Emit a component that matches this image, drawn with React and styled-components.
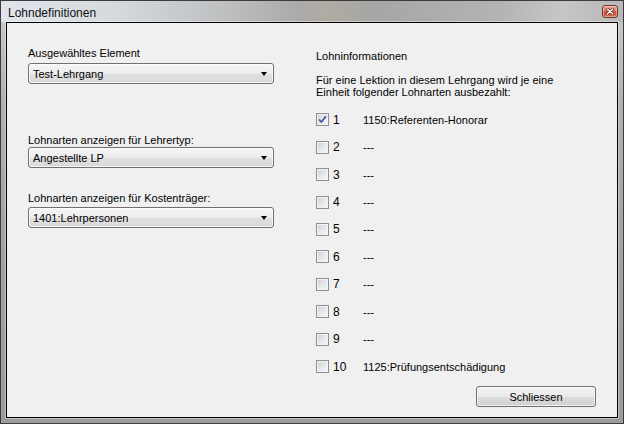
import React from "react";
import styled, { createGlobalStyle } from "styled-components";

const GlobalStyle = createGlobalStyle`
  html, body {
    margin: 0;
    padding: 0;
    background: #9a9a9a;
  }
  body {
    font-family: "Liberation Sans", Arial, sans-serif;
    font-size: 11px;
    color: #000;
  }
`;

const Window = styled.div`
  width: 624px;
  height: 424px;
  box-sizing: border-box;
  border: 1px solid #3c3c3c;
  background: linear-gradient(180deg, #c9cdd2 0%, #aeb0b2 25%, #a2a2a2 60%, #9c9c9c 100%);
  display: flex;
  flex-direction: column;
`;

const TitleBar = styled.div`
  height: 21px;
  display: flex;
  align-items: flex-start;
  padding: 0 5px 0 7px;
  background: linear-gradient(
    90deg,
    #dfe5eb 0%,
    #d6dadf 18%,
    #bfc1c3 35%,
    #aaaaaa 48%,
    #b1aca2 52%,
    #a6a6a6 60%,
    #b3b3b3 80%,
    #c6c6c6 90%,
    #b7b7b7 100%
  );
`;

const Title = styled.div`
  flex: 1;
  padding-top: 5px;
  line-height: 14px;
  font-size: 12px;
  color: #111;
`;

const CloseButton = styled.div`
  width: 16px;
  height: 13px;
  margin-top: 4px;
  box-sizing: border-box;
  border: 1px solid #6e3a32;
  border-radius: 3px;
  background: linear-gradient(180deg, #eba898 0%, #dc7763 45%, #c9472f 55%, #d8715a 100%);
  box-shadow: inset 0 0 0 1px rgba(255, 255, 255, 0.35);
  display: flex;
  align-items: center;
  justify-content: center;
`;

const Frame = styled.div`
  flex: 1;
  display: flex;
  padding: 0 5px 5px;
`;

const Client = styled.div`
  flex: 1;
  display: flex;
  background: #f0f0f0;
  border: 1px solid #000;
  box-shadow: 0 0 0 1px rgba(255, 255, 255, 0.4);
  padding: 24px 21px 9px;
`;

const LeftColumn = styled.div`
  width: 246px;
  display: flex;
  flex-direction: column;
`;

const RightColumn = styled.div`
  flex: 1;
  margin-left: 42px;
  display: flex;
  flex-direction: column;
`;

const Field = styled.div`
  display: flex;
  flex-direction: column;
  margin-top: ${(p) => p.$top || 0}px;
`;

const Label = styled.div`
  line-height: 13px;
  margin-bottom: ${(p) => p.$gap || 0}px;
`;

const Combo = styled.div`
  height: 21px;
  box-sizing: border-box;
  border: 1px solid #707070;
  border-radius: 3px;
  background: linear-gradient(180deg, #f6f6f6 0%, #ececec 50%, #e0e0e0 51%, #d9d9d9 100%);
  box-shadow: inset 0 0 0 1px rgba(255, 255, 255, 0.7);
  display: flex;
  align-items: center;
  padding: 0 6px 0 4px;
`;

const ComboText = styled.span`
  flex: 1;
`;

const Arrow = styled.span`
  width: 0;
  height: 0;
  border-left: 3.5px solid transparent;
  border-right: 3.5px solid transparent;
  border-top: 4px solid #000;
`;

const Heading = styled.div`
  line-height: 13px;
  margin-top: 3px;
`;

const Paragraph = styled.div`
  line-height: 12px;
  margin-top: 11px;
`;

const Rows = styled.div`
  margin-top: 8px;
  display: flex;
  flex-direction: column;
`;

const Row = styled.div`
  height: 27.44px;
  display: flex;
  align-items: center;
`;

const Box = styled.span`
  width: 13px;
  height: 13px;
  box-sizing: border-box;
  border: 1px solid #8e8f8f;
  background: linear-gradient(135deg, #cdd0d5 0%, #e6e7e9 50%, #f8f8f8 100%);
  box-shadow: inset 0 0 0 1px #f4f4f4;
  display: flex;
  align-items: center;
  justify-content: center;
`;

const Number = styled.span`
  width: 30px;
  margin-left: 4px;
  font-size: 12px;
`;

const Value = styled.span`
  font-size: 11px;
`;

const Footer = styled.div`
  margin-top: 6px;
  display: flex;
  justify-content: flex-end;
`;

const Button = styled.button`
  width: 120px;
  height: 21px;
  box-sizing: border-box;
  border: 1px solid #707070;
  border-radius: 3px;
  background: linear-gradient(180deg, #f3f3f3 0%, #ebebeb 50%, #dddddd 51%, #cfcfcf 100%);
  box-shadow: inset 0 0 0 1px rgba(255, 255, 255, 0.7);
  font-family: "Liberation Sans", Arial, sans-serif;
  font-size: 11px;
  color: #000;
  padding: 0;
`;

const CheckMark = () => (
  <svg width="9" height="9" viewBox="0 0 9 9">
    <path d="M1 4.5 L3.4 7 L8 1.2" fill="none" stroke="#3b58a8" strokeWidth="1.8" />
  </svg>
);

const CloseGlyph = () => (
  <svg width="8" height="7" viewBox="0 0 8 7">
    <path d="M1.2 1 L6.8 6 M6.8 1 L1.2 6" stroke="#5a1e16" strokeWidth="2.6" strokeLinecap="round" />
    <path d="M1.2 1 L6.8 6 M6.8 1 L1.2 6" stroke="#fff" strokeWidth="1.4" strokeLinecap="round" />
  </svg>
);

const wages = [
  { n: 1, value: "1150:Referenten-Honorar", checked: true },
  { n: 2, value: "---" },
  { n: 3, value: "---" },
  { n: 4, value: "---" },
  { n: 5, value: "---" },
  { n: 6, value: "---" },
  { n: 7, value: "---" },
  { n: 8, value: "---" },
  { n: 9, value: "---" },
  { n: 10, value: "1125:Prüfungsentschädigung" },
];

const App = () => {
  return (
    <>
      <GlobalStyle />
      <Window>
        <TitleBar>
          <Title>Lohndefinitionen</Title>
          <CloseButton>
            <CloseGlyph />
          </CloseButton>
        </TitleBar>
        <Frame>
          <Client>
            <LeftColumn>
              <Field>
                <Label $gap={3}>Ausgewähltes Element</Label>
                <Combo>
                  <ComboText>Test-Lehrgang</ComboText>
                  <Arrow />
                </Combo>
              </Field>
              <Field $top={50}>
                <Label $gap={0}>Lohnarten anzeigen für Lehrertyp:</Label>
                <Combo>
                  <ComboText>Angestellte LP</ComboText>
                  <Arrow />
                </Combo>
              </Field>
              <Field $top={24}>
                <Label $gap={2}>Lohnarten anzeigen für Kostenträger:</Label>
                <Combo>
                  <ComboText>1401:Lehrpersonen</ComboText>
                  <Arrow />
                </Combo>
              </Field>
            </LeftColumn>
            <RightColumn>
              <Heading>Lohninformationen</Heading>
              <Paragraph>
                Für eine Lektion in diesem Lehrgang wird je eine
                <br />
                Einheit folgender Lohnarten ausbezahlt:
              </Paragraph>
              <Rows>
                {wages.map((w) => (
                  <Row key={w.n}>
                    <Box>{w.checked && <CheckMark />}</Box>
                    <Number>{w.n}</Number>
                    <Value>{w.value}</Value>
                  </Row>
                ))}
              </Rows>
              <Footer>
                <Button>Schliessen</Button>
              </Footer>
            </RightColumn>
          </Client>
        </Frame>
      </Window>
    </>
  );
};

export default App;
